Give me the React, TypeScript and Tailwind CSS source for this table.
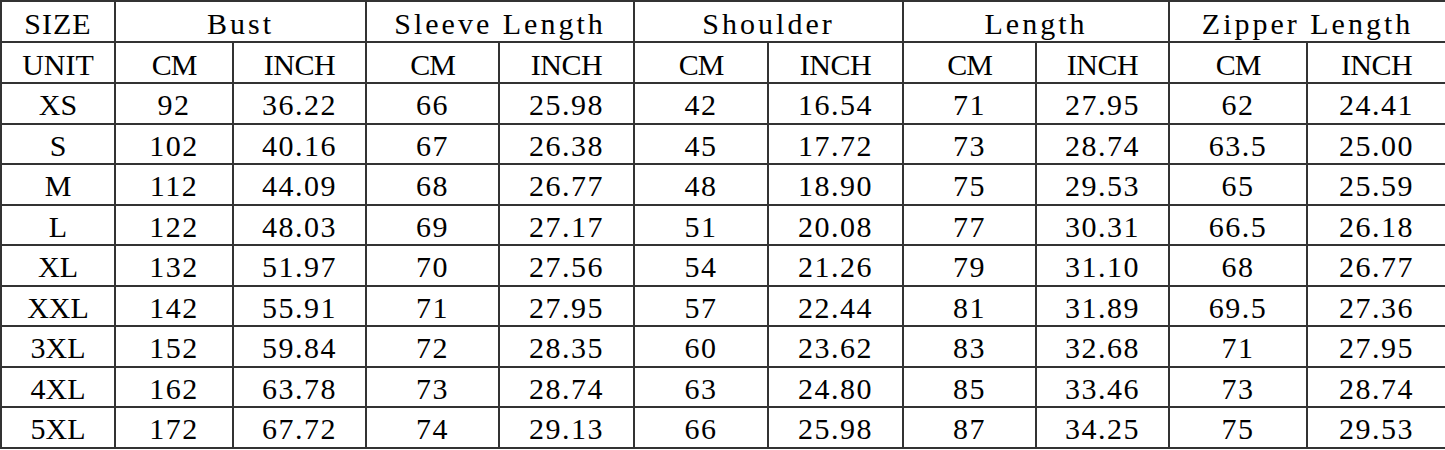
const cols = [114, 118, 133, 133, 135, 134, 135, 133, 133, 138, 139];

const groups = ['Bust', 'Sleeve Length', 'Shoulder', 'Length', 'Zipper Length'];

const rows: string[][] = [
  ['XS', '92', '36.22', '66', '25.98', '42', '16.54', '71', '27.95', '62', '24.41'],
  ['S', '102', '40.16', '67', '26.38', '45', '17.72', '73', '28.74', '63.5', '25.00'],
  ['M', '112', '44.09', '68', '26.77', '48', '18.90', '75', '29.53', '65', '25.59'],
  ['L', '122', '48.03', '69', '27.17', '51', '20.08', '77', '30.31', '66.5', '26.18'],
  ['XL', '132', '51.97', '70', '27.56', '54', '21.26', '79', '31.10', '68', '26.77'],
  ['XXL', '142', '55.91', '71', '27.95', '57', '22.44', '81', '31.89', '69.5', '27.36'],
  ['3XL', '152', '59.84', '72', '28.35', '60', '23.62', '83', '32.68', '71', '27.95'],
  ['4XL', '162', '63.78', '73', '28.74', '63', '24.80', '85', '33.46', '73', '28.74'],
  ['5XL', '172', '67.72', '74', '29.13', '66', '25.98', '87', '34.25', '75', '29.53'],
];

// every cell: dark rule lines, centred text, nudged a little below middle like the scan
const cell = 'border-2 border-[#333] text-center align-middle p-0 pt-[4px] leading-none font-normal';

export default function App() {
  return (
    <div className="w-[1445px] h-[450px] bg-white overflow-hidden">
      <table
        className="w-full table-fixed border-collapse text-black text-[30px]"
        style={{ fontFamily: '"Liberation Serif", serif' }}
      >
        <colgroup>
          {cols.map((w, i) => (
            <col key={i} style={{ width: w }} />
          ))}
        </colgroup>
        <thead>
          <tr className="h-[41px]">
            <th className={cell + ' tracking-[1px]'}>SIZE</th>
            {groups.map((g) => (
              <th key={g} colSpan={2} className={cell + ' tracking-[3px]'}>
                {g}
              </th>
            ))}
          </tr>
          <tr className="h-[41px]">
            <th className={cell}>UNIT</th>
            {groups.map((g) => (
              <>
                <th key={g + 'cm'} className={cell + ' tracking-[-1px]'}>CM</th>
                <th key={g + 'in'} className={cell + ' tracking-[-0.5px]'}>INCH</th>
              </>
            ))}
          </tr>
        </thead>
        <tbody>
          {rows.map((r) => (
            <tr key={r[0]} className="h-[40.5px]">
              {r.map((v, i) => (
                <td key={i} className={cell + (i === 0 ? '' : ' tracking-[1.5px]')}>
                  {v}
                </td>
              ))}
            </tr>
          ))}
        </tbody>
      </table>
    </div>
  );
}
